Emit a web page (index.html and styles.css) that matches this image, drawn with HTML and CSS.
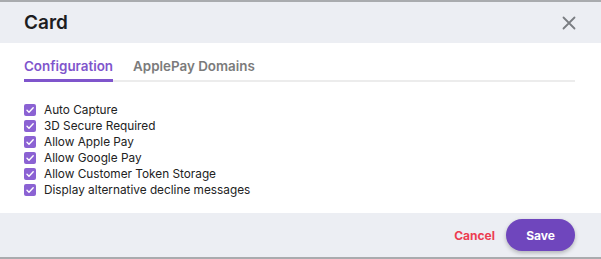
FILE: index.html
```html
<!DOCTYPE html>
<html>
<head>
<meta charset="utf-8">
<link rel="stylesheet" href="styles.css">
</head>
<body>
<div class="modal">
  <div class="header">
    <h1 class="title">Card</h1>
    <button class="close" aria-label="Close">
      <svg width="14" height="14" viewBox="0 0 14 14"><path d="M1.5 1.5 L12.5 12.5 M12.5 1.5 L1.5 12.5" stroke="#7a7d82" stroke-width="1.8" stroke-linecap="round" fill="none"/></svg>
    </button>
  </div>
  <div class="body">
    <div class="tabs">
      <div class="tab active">Configuration</div>
      <div class="tab">ApplePay Domains</div>
    </div>
    <ul class="options">
      <li><span class="cb"><svg width="12" height="12" viewBox="0 0 12 12"><path d="M3 6.2 L5 8.2 L9.2 3.8" stroke="#fff" stroke-width="1.4" fill="none" stroke-linecap="round" stroke-linejoin="round"/></svg></span>Auto Capture</li>
      <li><span class="cb"><svg width="12" height="12" viewBox="0 0 12 12"><path d="M3 6.2 L5 8.2 L9.2 3.8" stroke="#fff" stroke-width="1.4" fill="none" stroke-linecap="round" stroke-linejoin="round"/></svg></span>3D Secure Required</li>
      <li><span class="cb"><svg width="12" height="12" viewBox="0 0 12 12"><path d="M3 6.2 L5 8.2 L9.2 3.8" stroke="#fff" stroke-width="1.4" fill="none" stroke-linecap="round" stroke-linejoin="round"/></svg></span>Allow Apple Pay</li>
      <li><span class="cb"><svg width="12" height="12" viewBox="0 0 12 12"><path d="M3 6.2 L5 8.2 L9.2 3.8" stroke="#fff" stroke-width="1.4" fill="none" stroke-linecap="round" stroke-linejoin="round"/></svg></span>Allow Google Pay</li>
      <li><span class="cb"><svg width="12" height="12" viewBox="0 0 12 12"><path d="M3 6.2 L5 8.2 L9.2 3.8" stroke="#fff" stroke-width="1.4" fill="none" stroke-linecap="round" stroke-linejoin="round"/></svg></span>Allow Customer Token Storage</li>
      <li><span class="cb"><svg width="12" height="12" viewBox="0 0 12 12"><path d="M3 6.2 L5 8.2 L9.2 3.8" stroke="#fff" stroke-width="1.4" fill="none" stroke-linecap="round" stroke-linejoin="round"/></svg></span>Display alternative decline messages</li>
    </ul>
  </div>
  <div class="footer">
    <button class="cancel">Cancel</button>
    <button class="save">Save</button>
  </div>
</div>
</body>
</html>
```

FILE: styles.css
```css
* { box-sizing: border-box; }
html, body { margin: 0; padding: 0; background: #fff; }
body { font-family: Inter, "Liberation Sans", sans-serif; color: #222; }
.modal {
  width: 601px;
  height: 259px;
  display: flex;
  flex-direction: column;
  border-top: 2px solid #a9abae;
  border-bottom: 2px solid #a9abae;
}
.header {
  height: 41px;
  background: #eceef3;
  display: flex;
  align-items: center;
  justify-content: space-between;
  padding: 0 25px 0 24px;
}
.title {
  margin: 0;
  font-size: 19px;
  font-weight: 600;
  color: #1d1d1f;
}
.close {
  border: 0;
  background: none;
  padding: 0;
  width: 14px;
  height: 14px;
  display: flex;
}
.body {
  flex: 1;
  padding: 13px 26px 0 24px;
}
.tabs {
  display: flex;
  gap: 20px;
  border-bottom: 2px solid #ececec;
  height: 26px;
}
.tab {
  font-size: 13.4px;
  font-weight: 600;
  color: #7b7b7b;
  padding-top: 2px;
}
.tab.active {
  color: #7f55cc;
  border-bottom: 3px solid #7f55cc;
  margin-bottom: -2px;
}
.options {
  list-style: none;
  margin: 0;
  padding: 20px 0 0 0;
}
.options li {
  display: flex;
  align-items: center;
  height: 16px;
  font-size: 11.8px;
  color: #222;
}
.cb {
  width: 12px;
  height: 12px;
  border-radius: 2px;
  background: #8b62d3;
  margin-right: 8px;
  display: flex;
}
.footer {
  height: 44px;
  background: #eceef3;
  display: flex;
  align-items: center;
  justify-content: flex-end;
  padding: 0 26px 0 0;
  gap: 11px;
}
.cancel {
  border: 0;
  background: none;
  font-family: inherit;
  font-size: 12px;
  font-weight: 700;
  color: #ec3d50;
  padding: 0;
}
.save {
  border: 0;
  width: 69px;
  height: 32px;
  border-radius: 16px;
  background: #6f46bd;
  color: #fff;
  font-family: inherit;
  font-size: 12px;
  font-weight: 700;
  box-shadow: 0 2px 4px rgba(0,0,0,0.25);
}
```
